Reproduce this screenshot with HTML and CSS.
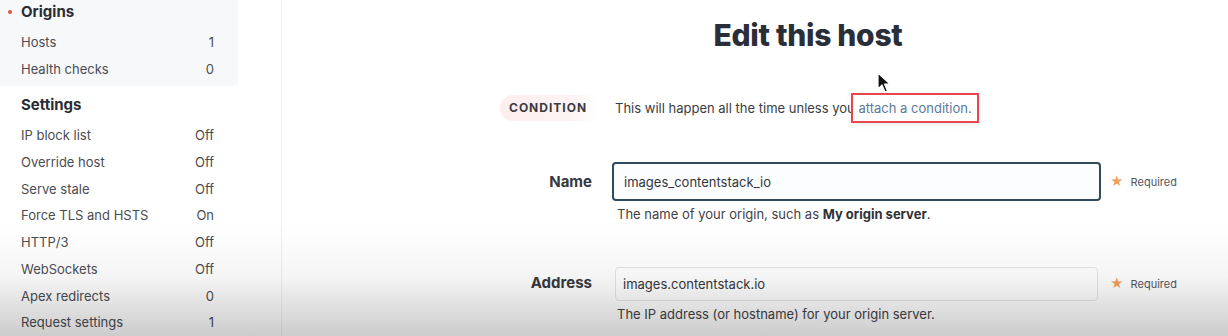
FILE: index.html
```html
<!DOCTYPE html>
<html lang="en">
<head>
    <meta charset="UTF-8">
    <title>Edit this host</title>
    <link rel="stylesheet" href="styles.css">
</head>
<body>
    <aside class="sidebar">
        <div class="nav-group active">
            <div class="nav-title"><span class="dot"></span>Origins</div>
            <div class="nav-item"><span>Hosts</span><span>1</span></div>
            <div class="nav-item"><span>Health checks</span><span>0</span></div>
        </div>
        <div class="nav-group">
            <div class="nav-title">Settings</div>
            <div class="nav-item"><span>IP block list</span><span>Off</span></div>
            <div class="nav-item"><span>Override host</span><span>Off</span></div>
            <div class="nav-item"><span>Serve stale</span><span>Off</span></div>
            <div class="nav-item"><span>Force TLS and HSTS</span><span>On</span></div>
            <div class="nav-item"><span>HTTP/3</span><span>Off</span></div>
            <div class="nav-item"><span>WebSockets</span><span>Off</span></div>
            <div class="nav-item"><span>Apex redirects</span><span>0</span></div>
            <div class="nav-item"><span>Request settings</span><span>1</span></div>
        </div>
    </aside>

    <main class="content">
        <h1 class="page-title">Edit this host</h1>

        <div class="condition-row">
            <span class="pill">CONDITION</span>
            <p class="condition-text">This will happen all the time unless you <a href="#" class="highlight">attach a condition.</a></p>
        </div>

        <div class="field">
            <label for="name">Name</label>
            <div class="control">
                <input type="text" id="name" class="input focused" value="images_contentstack_io">
                <p class="help">The name of your origin, such as <strong>My origin server</strong>.</p>
            </div>
            <span class="required"><span class="star">&#9733;</span>Required</span>
        </div>

        <div class="field address">
            <label for="address">Address</label>
            <div class="control">
                <input type="text" id="address" class="input" value="images.contentstack.io">
                <p class="help">The IP address (or hostname) for your origin server.</p>
            </div>
            <span class="required"><span class="star">&#9733;</span>Required</span>
        </div>
    </main>

    <svg class="cursor" width="14" height="22" viewBox="0 0 14 22">
        <path d="M1 1 L1 17 L5 13 L8 20 L10.5 19 L7.5 12 L13 12 Z" fill="#111" stroke="#fff" stroke-width="1.2" stroke-linejoin="round"/>
    </svg>

    <div class="shade"></div>
</body>
</html>
```

FILE: styles.css
```css
body {
    margin: 0;
    font-family: Inter, "Noto Sans", sans-serif;
    color: #333;
    background: #fff;
    display: flex;
    height: 336px;
    overflow: hidden;
    position: relative;
}
.sidebar {
    width: 281px;
    flex-shrink: 0;
    border-right: 1px solid #eeeff1;
}
.nav-group {
    width: 238px;
    padding-bottom: 4px;
}
.nav-group.active {
    background: #f7f8fa;
}
.nav-group + .nav-group {
    margin-top: 7px;
}
.nav-title {
    position: relative;
    height: 24px;
    line-height: 24px;
    padding-left: 21px;
    font-size: 15px;
    font-weight: 700;
    color: #2b2d33;
}
.dot {
    position: absolute;
    left: 8px;
    top: 10px;
    width: 4px;
    height: 4px;
    border-radius: 50%;
    background: #d9534f;
}
.nav-item {
    display: flex;
    justify-content: space-between;
    height: 26.7px;
    line-height: 26.7px;
    padding: 0 24px 0 21px;
    font-size: 13px;
    color: #4a4c52;
}
.nav-title + .nav-item {
    margin-top: 5px;
}
.content {
    flex: 1;
    padding-left: 218px;
}
.page-title {
    margin: 17px 0 0;
    padding-right: 112px;
    text-align: center;
    font-size: 30px;
    line-height: 36px;
    font-weight: 800;
    color: #2a2e38;
    letter-spacing: -0.3px;
}
.condition-row {
    display: flex;
    align-items: center;
    margin-top: 39px;
    height: 31px;
}
.pill {
    width: 100px;
    height: 26px;
    line-height: 26px;
    border-radius: 13px;
    background: linear-gradient(to right, #fdeeee, #fdf3f3 70%, #fff);
    box-sizing: border-box;
    padding-left: 9px;
    font-size: 12px;
    font-weight: 700;
    letter-spacing: 1px;
    color: #3a3a3e;
}
.condition-text {
    margin: 0 0 0 15px;
    font-size: 13px;
    color: #3b3d42;
}
.highlight {
    color: #5b7a99;
    text-decoration: none;
    outline: 2px solid #e9454d;
    outline-offset: 5px;
    box-shadow: 0 0 0 7px #fff, 0 2px 6px 7px rgba(0,0,0,0.08);
}
.field {
    display: flex;
    align-items: flex-start;
    margin-top: 39px;
}
.field label {
    width: 92px;
    text-align: right;
    font-size: 15px;
    font-weight: 700;
    line-height: 39px;
    color: #36383d;
}
.control {
    width: 489px;
    margin-left: 20px;
}
.input {
    display: block;
    width: 100%;
    height: 39px;
    box-sizing: border-box;
    padding: 0 10px;
    border: 1px solid #e4e5e7;
    border-radius: 4px;
    font-family: inherit;
    font-size: 13px;
    color: #34363b;
    background: #fff;
}
.input.focused {
    border: 2px solid #2f4a5f;
    background: #fbfdfe;
}
.address .input {
    width: 483px;
    height: 34px;
    margin: 2px 3px 0;
    padding-left: 7px;
}
.help {
    margin: 5px 0 0 5px;
    font-size: 13px;
    color: #3f4146;
}
.help strong {
    color: #2f3136;
}
.required {
    margin-left: 9px;
    line-height: 39px;
    font-size: 11px;
    color: #55575c;
}
.star {
    color: #f0a05a;
    font-size: 13px;
    margin-right: 7px;
}
.address {
    margin-top: 43px;
}
.address label,
.address .required {
    line-height: 36px;
}
.cursor {
    position: absolute;
    left: 877px;
    top: 72px;
}
.shade {
    position: absolute;
    left: 0;
    right: 0;
    bottom: 0;
    height: 110px;
    background: linear-gradient(to bottom, rgba(0,0,0,0), rgba(0,0,0,0.04) 45%, rgba(0,0,0,0.2));
    pointer-events: none;
}
```
